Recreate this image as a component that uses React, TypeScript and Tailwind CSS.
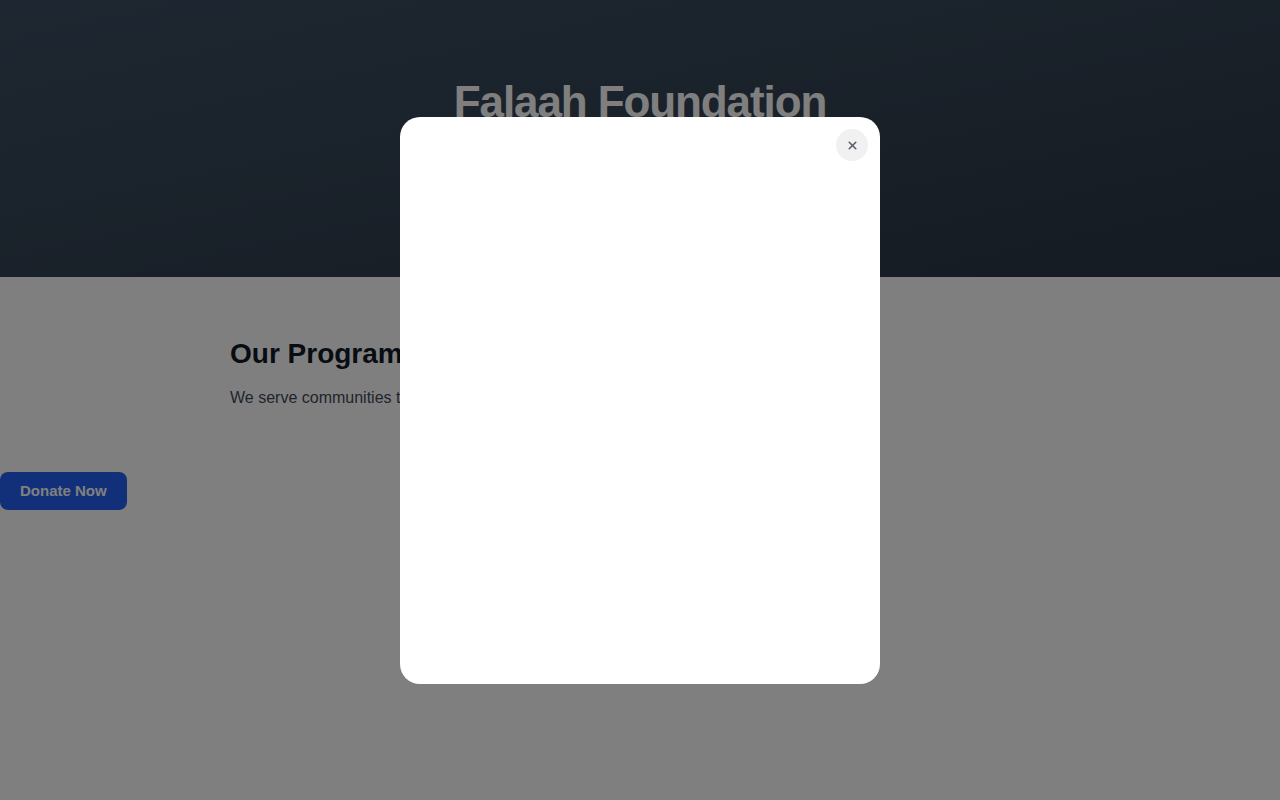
import { X } from "lucide-react";

export default function App() {
  return (
    <div className="relative min-h-[800px] bg-white font-['Liberation_Sans',Arial,sans-serif]">
      {/* Hero */}
      <header className="h-[277px] bg-gradient-to-br from-[#3d4f63] to-[#2a3644] pt-20 text-center">
        <h1 className="text-[44px] leading-none font-bold tracking-tight text-white">Falaah Foundation</h1>
        <p className="mt-5 text-lg text-white/80">Empowering communities through education and care</p>
      </header>

      {/* Programs */}
      <section className="mx-auto max-w-[820px] pt-[59px]">
        <h2 className="text-[28px] leading-tight font-bold text-[#111827]">Our Programs</h2>
        <p className="mt-[15px] text-base text-[#3f4a5c]">
          We serve communities through education, healthcare and relief programs.
        </p>
      </section>

      {/* Floating donate */}
      <button className="fixed left-0 top-[472px] h-[38px] rounded-lg bg-[#2461f2] px-5 text-[15px] font-bold text-white">
        Donate Now
      </button>

      {/* Modal */}
      <div className="fixed inset-0 flex items-start justify-center bg-black/50 pt-[117px]">
        <div className="relative h-[567px] w-[480px] rounded-[20px] bg-white">
          <button className="absolute right-[12px] top-[12px] flex h-8 w-8 items-center justify-center rounded-full bg-[#f1f1f2] text-[#5b5f6a]">
            <X size={13} strokeWidth={3} />
          </button>
        </div>
      </div>
    </div>
  );
}
